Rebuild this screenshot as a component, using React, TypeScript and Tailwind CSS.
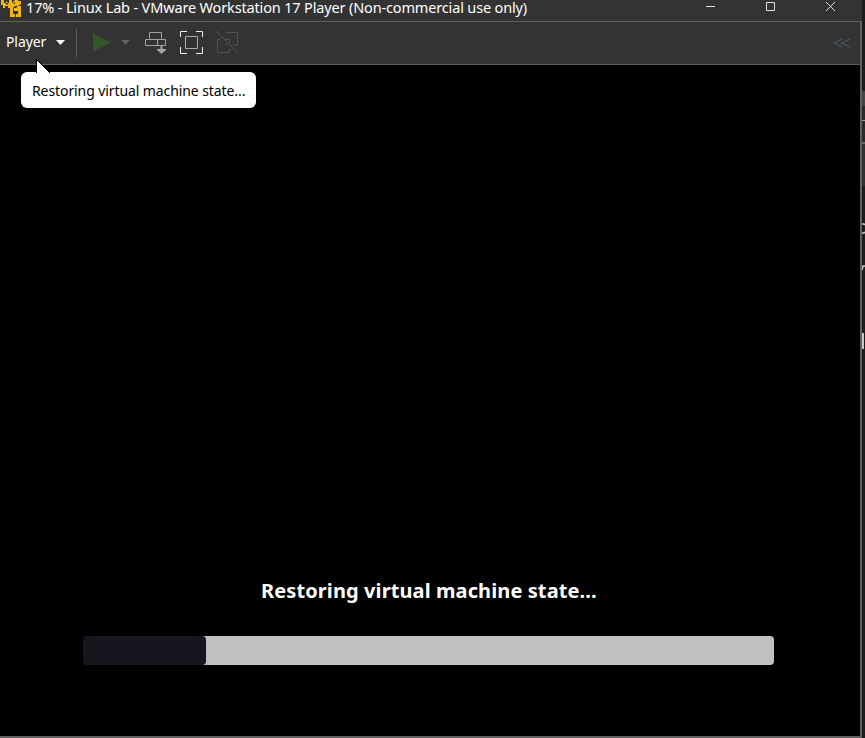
import React from "react";

function VmLogo() {
  return (
    <svg width="22" height="17" viewBox="0 0 22 17" className="shrink-0" fill="#f0b414">
      <path d="M1 0h3v3h2V1l3 2.500V0h3v3l3-3h3v1h3v3l-3 2h-3l-2 2v6h2v3h-5V8H8V6H5v2H3V5H1z" />
      <path d="M18 6h3v11h-5v-3h2v-3h-4V8h2z" />
      <path d="M6 3h2v1.500H6zM13 3.500l2-1.500v2z" fill="#333333" />
    </svg>
  );
}

function TitleBar() {
  return (
    <header className="flex h-[22px] items-start border-b border-[#606060] bg-[#333333] text-white">
      <VmLogo />
      <h1 className="ml-[4px] grow whitespace-nowrap text-[14.5px] leading-[14px] tracking-[-0.155px]">
        17% - Linux Lab - VMware Workstation 17 Player (Non-commercial use only)
      </h1>
      <svg width="156" height="14" viewBox="0 0 156 14" className="shrink-0" fill="none" stroke="#e0e0e0">
        <path d="M0 6.500h9M60.500 2.500h8v8h-8z" />
        <path d="M120 2l9 9M129 2l-9 9" />
      </svg>
    </header>
  );
}

function Toolbar() {
  return (
    <nav className="flex h-[43px] items-start border-b border-[#606060] bg-[#333333] pl-[6px] text-white">
      <span className="mt-[10px] w-[41px] whitespace-nowrap text-[14px] leading-[20px] tracking-[-0.1px]">Player</span>
      <svg width="9" height="5" viewBox="0 0 9 5" className="ml-[9px] mt-[18px]" fill="#ffffff">
        <path d="M0 0h9L4.500 5z" />
      </svg>
      <div className="ml-[11px] mt-[7px] h-7 w-px bg-[#606060]" />
      <svg width="18" height="20" viewBox="0 0 18 20" className="ml-[16px] mt-[11px]" fill="#37552a">
        <path d="M0 0L18 9.500L0 19z" />
      </svg>
      <svg width="9" height="5" viewBox="0 0 9 5" className="ml-[10px] mt-[18px]" fill="#606060">
        <path d="M0 0h9L4.500 5z" />
      </svg>
      <svg width="22" height="23" viewBox="0 0 22 23" className="ml-[15px] mt-[9px]" fill="none" stroke="#a4a4a4">
        <path d="M4.500 7.500v-6h12v6M.5 8.500h20v6H.5zM12.500 8.500v6" />
        <path d="M16.500 15v5" strokeWidth="2" />
        <path d="M12 18h9v1l-4.500 4l-4.500-4z" fill="#a4a4a4" stroke="none" />
      </svg>
      <svg width="24" height="24" viewBox="0 0 24 24" className="ml-[13px] mt-[8px]" fill="none">
        <path d="M.5 7V1.500H7M16 1.500h6.500V7M22.500 17v6.500H16M7 23.500H.5V17" stroke="#eeeeee" />
        <path d="M5.500 6.500h12v12h-12z" stroke="#aaaaaa" />
      </svg>
      <svg width="23" height="23" viewBox="0 0 23 23" className="ml-[12px] mt-[9px]" fill="none" stroke="#545454">
        <path d="M10 1.500h11.500v12.500H17M9.500 7v3M4 8.500H1.500v13h12V18M9 8.500h4.500v3M9.500 13.500h2" />
        <path d="M0 0l22 22" />
      </svg>
      <svg width="18" height="10" viewBox="0 0 18 10" className="ml-auto mr-[9px] mt-[16px]" fill="none" stroke="#485762" strokeWidth="1.300">
        <path d="M9.500 1L1 5l8.500 4M17 1L8.500 5L17 9" />
      </svg>
    </nav>
  );
}

function Tooltip() {
  return (
    <div className="absolute left-[21px] top-[59px]">
      <svg width="15" height="14" viewBox="0 0 15 14" className="ml-[15px] block">
        <path d="M.5 14V.5L14 14" fill="#ffffff" stroke="#000000" />
      </svg>
      <div className="-mt-px h-9 w-[235px] whitespace-nowrap rounded-[6px] bg-white pl-[11px] pt-[9px] text-[14px] leading-[20px] tracking-[-0.09px] text-black">
        Restoring virtual machine state...
      </div>
    </div>
  );
}

function DesktopEdge() {
  return (
    <aside className="flex w-[3px] shrink-0 flex-col overflow-hidden bg-[#1c1c1c]">
      <div className="mt-[91px] h-[15px] bg-[#454545]" />
      <div className="h-[14px] bg-[#2a2a2a]" />
      <div className="h-px bg-[#a0a0a0]" />
      <div className="h-[21px] bg-[#2a2a2a]" />
      <div className="h-[2px] bg-[#666666]" />
      <div className="h-[42px] bg-[#303030]" />
      <svg width="3" height="170" viewBox="0 0 3 170" fill="none" stroke="#c8c8c8" strokeWidth="1.500">
        <path d="M0 38h2l1 1M0 47h2l1-1M0 84l1-4h2" />
        <path d="M1 147v16" strokeWidth="2" />
      </svg>
    </aside>
  );
}

export default function App() {
  return (
    <div className="relative flex h-[738px] w-[865px] overflow-hidden bg-black font-['Noto_Sans','Open_Sans',sans-serif]">
      <div className="flex min-w-0 grow flex-col">
        <TitleBar />
        <div className="flex grow flex-col border-b-2 border-r-2 border-[#606060]">
          <Toolbar />
          <main className="flex grow flex-col bg-black">
            <h2 className="ml-[261px] mt-[513px] whitespace-nowrap text-[20px] font-bold leading-[26px] tracking-[0.1px] text-white">
              Restoring virtual machine state...
            </h2>
            <div className="ml-[83px] mt-8 flex h-[29px] w-[691px]">
              <div className="z-10 w-[123px] shrink-0 rounded-[4px] bg-[#16161e]" />
              <div className="-ml-[3px] grow rounded-r-[4px] bg-[#c0c0c0]" />
            </div>
          </main>
        </div>
      </div>
      <DesktopEdge />
      <Tooltip />
    </div>
  );
}
